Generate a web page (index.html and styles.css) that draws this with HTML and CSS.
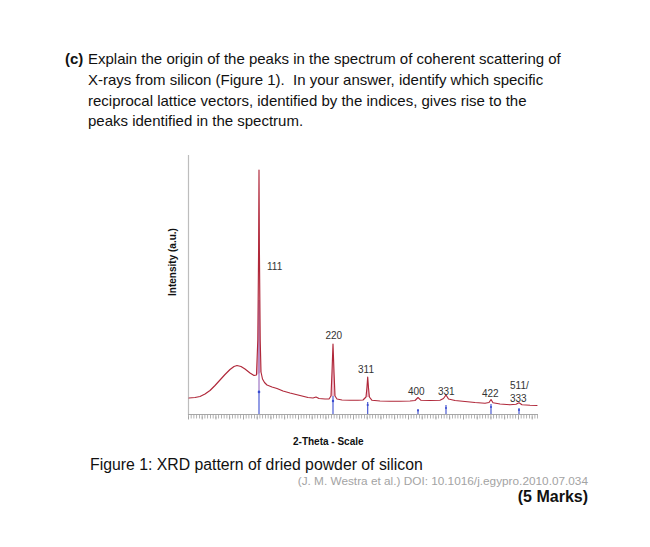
FILE: index.html
```html
<!DOCTYPE html>
<html>
<head>
<meta charset="utf-8">
<link rel="stylesheet" href="styles.css">
</head>
<body>
<div class="page">
  <div class="question">
    <span class="qlabel">(c)</span>
    <p class="qtext">Explain the origin of the peaks in the spectrum of coherent scattering of<br>X-rays from silicon (Figure 1).&nbsp; In your answer, identify which specific<br>reciprocal lattice vectors, identified by the indices, gives rise to the<br>peaks identified in the spectrum.</p>
  </div>
  <figure class="figure">
    <svg class="chart" width="650" height="275" viewBox="0 150 650 275" xmlns="http://www.w3.org/2000/svg">
      <!-- y axis -->
      <line x1="188.5" y1="155" x2="188.5" y2="415" stroke="#bdbdbd" stroke-width="1.2"/>
      <!-- x axis -->
      <line x1="188" y1="414.5" x2="538" y2="414.5" stroke="#a8a8a8" stroke-width="1"/>
      <line x1="188" y1="416.5" x2="538" y2="416.5" stroke="#a0a0a0" stroke-width="4" stroke-dasharray="0.8 1.95"/>
      <line x1="188" y1="418" x2="538" y2="418" stroke="#a0a0a0" stroke-width="3" stroke-dasharray="0.9 12.85"/>
      <!-- peak interiors -->
      <g fill="#eebccb">
        <polygon points="256.5,375 257.8,340 258.6,250 259,170 259.4,250 260.2,340 261,372"/>
        <polygon points="331,396 332,372 333,344 334,372 335,396"/>
        <polygon points="366,397 366.9,388 367.7,377 368.5,388 369.4,397"/>
      </g>
      <!-- blue reference markers -->
      <line x1="259" y1="300" x2="259" y2="390" stroke="#8a5ab8" stroke-width="1"/>
      <g stroke="#3a4bd0" stroke-width="1.1">
        <line x1="259" y1="390" x2="259" y2="414"/>
        <line x1="333" y1="396" x2="333" y2="414"/>
        <line x1="367.7" y1="402" x2="367.7" y2="414"/>
        <line x1="418" y1="409" x2="418" y2="414"/>
        <line x1="446" y1="405" x2="446" y2="414"/>
        <line x1="491" y1="404" x2="491" y2="414"/>
        <line x1="519" y1="408" x2="519" y2="414"/>
      </g>
      <g fill="#3a4bd0">
        <circle cx="259" cy="392" r="1.3"/>
        <circle cx="333" cy="401" r="1.2"/>
        <circle cx="367.7" cy="405" r="1.1"/>
        <circle cx="418" cy="410.5" r="1"/>
        <circle cx="446" cy="408" r="1"/>
        <circle cx="491" cy="407" r="1"/>
        <circle cx="519" cy="410" r="1"/>
      </g>
      <!-- spectrum -->
      <polyline fill="none" stroke="#b0283a" stroke-width="1.15" stroke-linejoin="round" stroke-linecap="round"
        points="189,398 195,397.5 200,396.5 205,394 210,390.5 215,385.5 220,380 225,374.5 230,369.5 234,366.5 237,365.5 241,366.5 245,369 250,373 254,375.5 256.5,375 257.8,340 258.6,250 259,170 259.4,250 260.2,340 261,372 262.5,379 264.5,382.5 267,385 272,387 277,388.5 283,391 290,393 296,394.5 302,396 308,397.5 313,398 316,397 319,398.5 325,399 329,399 331,396 332,372 333,344 334,372 335,396 337,399 342,400 350,400.2 358,400.2 363,400 366,397 366.9,388 367.7,377 368.5,388 369.4,397 372,400.3 380,401 390,401.3 400,401.2 410,401 415,400.5 418,397.5 421,400.3 430,400.5 440,400.2 443.5,398.5 446,395 448.5,399 455,400.5 465,401.5 475,402.5 485,403.2 489,402.5 491,399.5 493,402.8 500,404 510,404.8 516,404.3 519,402.8 522,404.8 530,405.3 537,405.5"/>
      <!-- peak labels -->
      <g font-family="'Liberation Sans', Arial, sans-serif" font-size="10" fill="#333">
        <text x="267" y="269.5">111</text>
        <text x="325.5" y="339">220</text>
        <text x="358" y="373">311</text>
        <text x="408" y="395">400</text>
        <text x="438" y="395">331</text>
        <text x="482" y="397">422</text>
        <text x="510" y="389">511/</text>
        <text x="510" y="402">333</text>
      </g>
      <text x="175.5" y="262" transform="rotate(-90 175.5 262)" text-anchor="middle" font-family="'Liberation Sans', Arial, sans-serif" font-size="10" font-weight="bold" fill="#111">Intensity (a.u.)</text>
    </svg>
    <div class="xlabel">2-Theta - Scale</div>
  </figure>
  <div class="caption">Figure 1: XRD pattern of dried powder of silicon</div>
  <div class="cite">(J. M. Westra et al.) DOI: 10.1016/j.egypro.2010.07.034</div>
  <div class="marks">(5 Marks)</div>
</div>
</body>
</html>
```

FILE: styles.css
```css
html, body {
  margin: 0;
  padding: 0;
  background: #ffffff;
}

body {
  font-family: "Liberation Sans", Arial, sans-serif;
  color: #111;
  width: 650px;
  height: 547px;
  overflow: hidden;
}

.page {
  padding-top: 49.3px;
}

.question {
  display: flex;
  margin-left: 65px;
  font-size: 15px;
  line-height: 20.7px;
}

.qlabel {
  flex: 0 0 23px;
  font-weight: bold;
}

.qtext {
  margin: 0;
  white-space: nowrap;
}

.figure {
  margin: 18px 0 0 0;
  padding: 0;
}

.chart {
  display: block;
}

.xlabel {
  margin: 11px 0 0 293px;
  font-size: 10px;
  line-height: 12px;
  font-weight: bold;
  color: #111;
}

.caption {
  margin: 7.5px 0 0 90px;
  font-size: 15.8px;
  line-height: 18px;
  color: #111;
}

.cite {
  padding-right: 62px;
  text-align: right;
  font-size: 11.8px;
  line-height: 14px;
  color: #a3a3a3;
}

.marks {
  margin-top: 0.7px;
  padding-right: 62px;
  text-align: right;
  font-size: 16px;
  line-height: 18px;
  font-weight: bold;
  color: #111;
}
```
